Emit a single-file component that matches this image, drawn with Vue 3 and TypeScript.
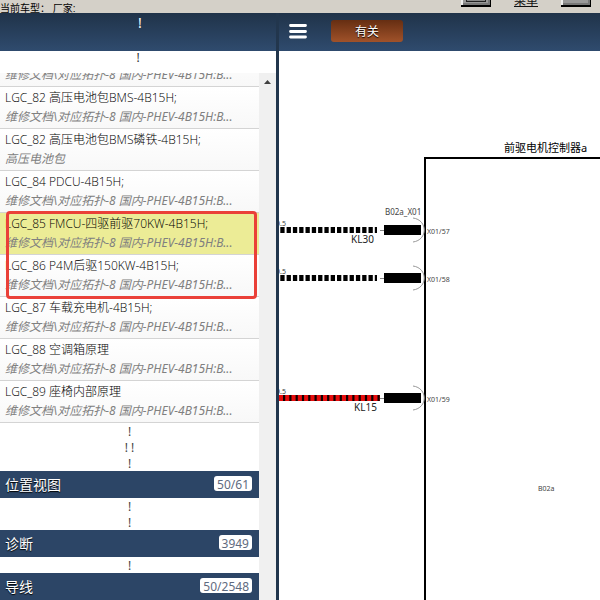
<script setup lang="ts">
import { ref } from 'vue'

interface Entry {
  title: string
  path: string
}

interface Section {
  name: string
  count: string
  marks: string[]
}

interface Wire {
  y: number
  pin: string
  label: string
  labelX: number
  live: boolean
}

const docPath = '维修文档\\对应拓扑-8 国内-PHEV-4B15H:B...'

const before: Entry[] = [
  { title: 'LGC_82 高压电池包BMS-4B15H;', path: docPath },
  { title: 'LGC_82 高压电池包BMS磷铁-4B15H;', path: '高压电池包' },
  { title: 'LGC_84 PDCU-4B15H;', path: docPath },
]
const marked: Entry[] = [
  { title: 'LGC_85 FMCU-四驱前驱70KW-4B15H;', path: docPath },
  { title: 'LGC_86 P4M后驱150KW-4B15H;', path: docPath },
]
const after: Entry[] = [
  { title: 'LGC_87 车载充电机-4B15H;', path: docPath },
  { title: 'LGC_88 空调箱原理', path: docPath },
  { title: 'LGC_89 座椅内部原理', path: docPath },
]

const sections: Section[] = [
  { name: '位置视图', count: '50/61', marks: ['!', '! !', '!'] },
  { name: '诊断', count: '3949', marks: ['!', '!'] },
  { name: '导线', count: '50/2548', marks: ['!'] },
]

const wires: Wire[] = [
  { y: 179, pin: 'X01/57', label: 'KL30', labelX: 72, live: false },
  { y: 227, pin: 'X01/58', label: '', labelX: 0, live: false },
  { y: 347, pin: 'X01/59', label: 'KL15', labelX: 75, live: true },
]

const selected = ref('LGC_85 FMCU-四驱前驱70KW-4B15H;')
</script>

<template>
  <div class="app">
    <div class="topbar">
      <span class="vehicle">当前车型： 厂家:</span>
      <div class="tools">
        <button class="tool" type="button" aria-label="窗口"><span class="tool-face"></span></button>
        <a class="menu-link" href="#menu">菜单</a>
        <button class="tool" type="button" aria-label="关闭"></button>
      </div>
    </div>

    <div class="body">
      <aside class="sidebar">
        <header class="head side-head">!</header>
        <div class="notice">!</div>
        <div class="scroller">
          <div class="content">
            <div class="cut">
              <a class="entry" href="#entry"><span class="path">{{ docPath }}</span></a>
            </div>
            <a v-for="e in before" :key="e.title" class="entry" :class="{ active: selected === e.title }" href="#entry" @click.prevent="selected = e.title">
              <span class="title">{{ e.title }}</span><span class="path">{{ e.path }}</span>
            </a>
            <div class="marked">
              <a v-for="e in marked" :key="e.title" class="entry" :class="{ active: selected === e.title }" href="#entry" @click.prevent="selected = e.title">
                <span class="title">{{ e.title }}</span><span class="path">{{ e.path }}</span>
              </a>
            </div>
            <a v-for="e in after" :key="e.title" class="entry" :class="{ active: selected === e.title }" href="#entry" @click.prevent="selected = e.title">
              <span class="title">{{ e.title }}</span><span class="path">{{ e.path }}</span>
            </a>
            <template v-for="s in sections" :key="s.name">
              <div v-for="(m, i) in s.marks" :key="i" class="mark">{{ m }}</div>
              <button class="section" type="button">
                <span>{{ s.name }}</span><span class="count">{{ s.count }}</span>
              </button>
            </template>
          </div>
          <div class="track">
            <svg width="7" height="4" viewBox="0 0 7 4"><path d="M0 4L3.5 0L7 4Z" fill="#404040" /></svg>
          </div>
        </div>
      </aside>

      <main class="main">
        <header class="head main-head">
          <button class="burger" type="button" aria-label="菜单">
            <svg width="18" height="16" viewBox="0 0 18 16"><path d="M1.5 2.5H16.5M1.5 8.5H16.5M1.5 14H16.5" stroke="#fff" stroke-width="2.8" stroke-linecap="round" /></svg>
          </button>
          <button class="related" type="button">有关</button>
        </header>
        <svg class="diagram">
          <rect x="146" y="107" width="2000" height="2000" fill="none" stroke="#000" stroke-width="2" />
          <text class="name" x="225" y="101">前驱电机控制器a</text>
          <text class="plug" x="106" y="164">B02a_X01</text>
          <text class="small" x="259" y="440">B02a</text>
          <g v-for="w in wires" :key="w.pin">
            <text class="small" x="-3" :y="w.y - 4">0.5</text>
            <template v-if="w.live">
              <path :d="`M0 ${w.y}H101`" stroke="#e80c0c" stroke-width="6" />
              <path :d="`M4 ${w.y}H101`" stroke="#100" stroke-width="6" stroke-dasharray="2.2 4.1" />
            </template>
            <path v-else :d="`M-4 ${w.y}H98`" stroke="#000" stroke-width="6" stroke-dasharray="4.3 2" stroke-dashoffset="1" />
            <path :d="`M101 ${w.y + 0.5}H105`" stroke="#888" />
            <rect x="105" :y="w.y - 5" width="37" height="10" />
            <path :d="`M134 ${w.y - 12}C149 ${w.y - 10} 149 ${w.y + 10} 134 ${w.y + 12}`" fill="none" stroke="#999" />
            <text class="small" x="148" :y="w.y + 4">{{ w.pin }}</text>
            <text v-if="w.label" class="label" :x="w.labelX" :y="w.y + 13">{{ w.label }}</text>
          </g>
        </svg>
      </main>
    </div>
  </div>
</template>

<style>
body {
  margin: 0;
}
</style>

<style scoped>
.app {
  display: flex;
  flex-direction: column;
  height: 100vh;
  overflow: hidden;
  background: #fff;
  color: #000;
  font-family: "Noto Sans", "Noto Sans CJK SC", sans-serif;
  font-size: 12px;
}
.app * {
  box-sizing: border-box;
}
button {
  margin: 0;
  padding: 0;
  border: 0;
  font-family: inherit;
}
.topbar {
  display: flex;
  justify-content: space-between;
  flex: none;
  height: 13px;
  overflow: hidden;
  background: #d4d0c8;
}
.vehicle {
  font-size: 10px;
  line-height: 17px;
  font-family: "Liberation Sans", "Noto Sans CJK SC", sans-serif;
}
.tools {
  display: flex;
  align-items: flex-end;
  gap: 20px;
  padding: 0 9px 6px 0;
}
.tool {
  display: flex;
  justify-content: center;
  width: 30px;
  height: 20px;
  background: #999;
  border: solid #000;
  border-width: 0 1px 2px 0;
  box-shadow: inset 2px 0 0 #eee, inset -2px -2px 0 #777;
}
.tool-face {
  width: 20px;
  height: 15px;
  background: #888;
  border: 1px solid #222;
}
.menu-link {
  width: 30px;
  color: #111;
  line-height: 12px;
  text-align: center;
}
.body {
  display: flex;
  flex: 1;
  min-height: 0;
}
.sidebar {
  display: flex;
  flex-direction: column;
  flex: 0 0 279px;
  border-right: 3px solid #22364d;
}
.head {
  flex: none;
  height: 38px;
  background: linear-gradient(#203349, #2f4b6e);
  color: #fff;
}
.side-head {
  padding-left: 4px;
  font-size: 14px;
  line-height: 20px;
  text-align: center;
}
.notice {
  flex: none;
  height: 22px;
  line-height: 14px;
  text-align: center;
  color: #333;
}
.scroller {
  display: flex;
  flex: 1;
  min-height: 0;
}
.content {
  flex: 1;
  min-width: 0;
  overflow: hidden;
}
.track {
  display: flex;
  justify-content: center;
  flex: 0 0 17px;
  padding-top: 7px;
  background: #f0f0f0;
}
.cut {
  display: flex;
  align-items: flex-end;
  height: 14px;
  overflow: hidden;
}
.cut .entry {
  flex: 1;
  justify-content: flex-end;
}
.entry {
  display: flex;
  flex-direction: column;
  height: 42px;
  padding: 1px 5px 2px;
  border-bottom: 1px solid #d4d4d4;
  background: linear-gradient(#fff, #f8f8f8);
  color: #000;
  text-decoration: none;
  white-space: nowrap;
  line-height: 19px;
}
.title {
  font-family: "Open Sans", "Noto Sans CJK SC", sans-serif;
  font-weight: 300;
}
.entry.active {
  background: #ecec96;
}
.path {
  color: #808080;
  font-style: italic;
}
.marked {
  position: relative;
}
.marked::after {
  content: "";
  position: absolute;
  inset: -2px 2px -2px 6px;
  border: 3px solid #ea4038;
  border-radius: 4px;
  pointer-events: none;
}
.mark {
  height: 16px;
  line-height: 17px;
  text-align: center;
  color: #444;
}
.section {
  display: flex;
  align-items: center;
  justify-content: space-between;
  width: 100%;
  height: 27px;
  padding: 0 7px 2px 5px;
  background: #2c4566;
  color: #fff;
  font-size: 14px;
  text-shadow: 0 1px 1px #000;
}
.count {
  height: 15px;
  padding: 0 3px;
  border-radius: 3px;
  background: #fff;
  color: #5f6b80;
  font-size: 12px;
  line-height: 17px;
  text-shadow: none;
}
.main {
  display: flex;
  flex-direction: column;
  flex: 1;
  min-width: 0;
}
.main-head {
  display: flex;
  align-items: center;
  gap: 19px;
  padding: 0 0 2px 5px;
}
.burger {
  display: flex;
  align-items: center;
  justify-content: center;
  width: 28px;
  height: 24px;
  background: none;
}
.related {
  width: 72px;
  height: 22px;
  border-radius: 3px;
  background: linear-gradient(#662e12, #a0522a);
  color: #fff;
  font-size: 12px;
  text-shadow: 0 1px 1px #000;
}
.diagram {
  flex: 1;
  width: 100%;
  min-height: 0;
}
.name {
  font-size: 11px;
}
.small {
  fill: #444;
  font-size: 7px;
}
.plug {
  fill: #444;
  font-size: 8px;
}
.label {
  fill: #222;
  font-size: 10px;
}
</style>
